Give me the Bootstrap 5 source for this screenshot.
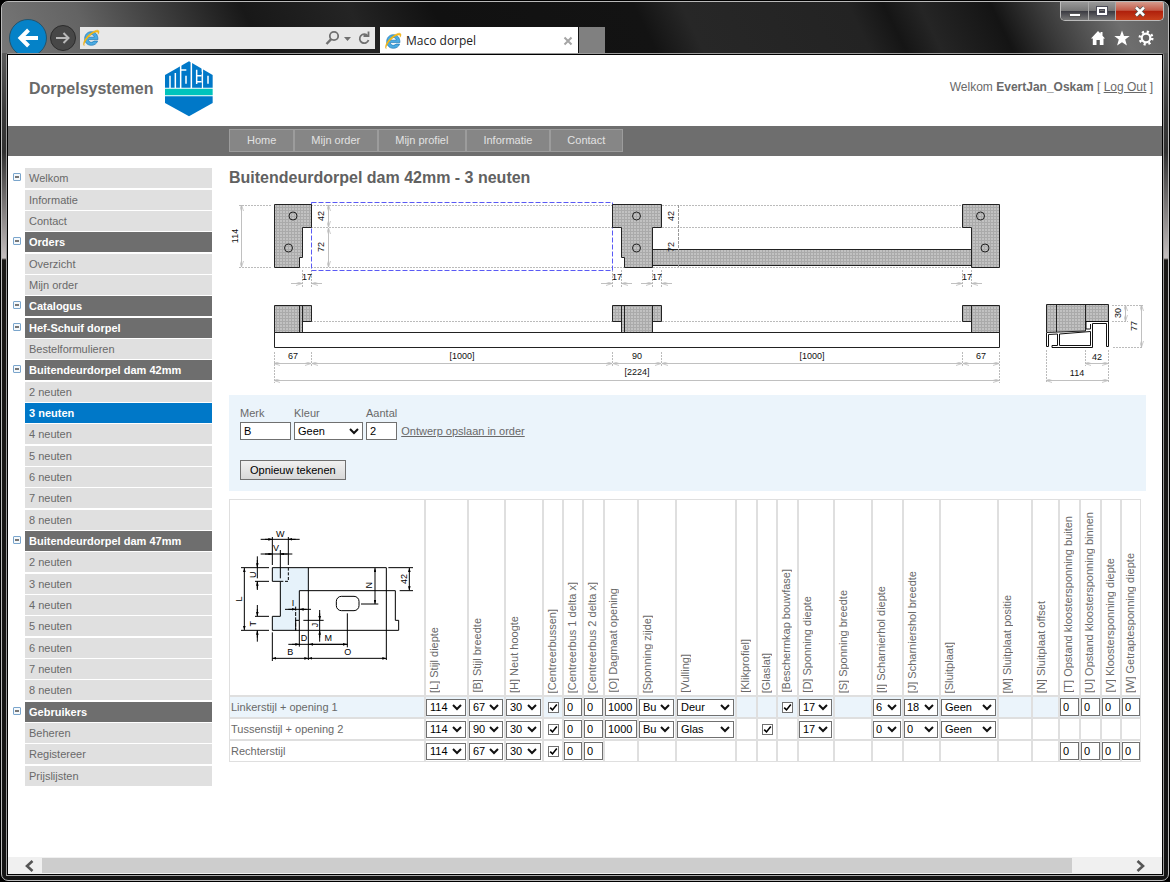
<!DOCTYPE html>
<html lang="nl">
<head>
<meta charset="utf-8">
<meta name="viewport" content="width=device-width, initial-scale=1">
<title>Maco dorpel</title>
<link rel="stylesheet" href="https://cdn.jsdelivr.net/npm/bootstrap@5.3.0/dist/css/bootstrap.min.css">
<style>
body{background:#000;padding:1px;font:11px/14px "Liberation Sans",Arial,sans-serif;color:#696969}
a{color:inherit}
button{font:inherit}
.frame{border:1px solid #b9b9b9;border-radius:7px;padding:0 4px 4px;
  background:linear-gradient(#777 0,#3a3a3a 110px,#303030 150px,#c5bfbf 256px,#1a1816 258px,#141414 100%)}
.chrome{height:51px;margin:0 -4px;overflow:hidden;border-radius:6px 6px 0 0;
  background:linear-gradient(64deg,#777 0,#636363 8%,#3d3d3d 15%,#181818 22%,#242424 31%,#111 38%,#131313 55%,#272727 59%,#232323 73%,#151515 76%,#252525 79%,#141414 85%,#3a3a3a 89%,#6e6e6e 95%,#5d5d5d 100%)}
.navround{border-radius:50%;flex:none;border:1px solid #333}
.nav-back{width:38px;height:38px;margin:17px 3px 0 7px;background:#0582c8;border-color:#26536b}
.nav-fwd{width:26px;height:26px;margin:23px 4px 0 0;background:#474747;border:1px solid #2b2b2b}
.addr{width:295px;height:22px;margin:25px 5px 0 0;background:#e8e8e8;padding:0 4px 0 2px}
.addr input{border:0;background:none;min-width:0;outline:0}
.tab-on{width:198px;height:27px;margin-top:25px;background:#fff;color:#222;padding:0 5px 0 4px;font:12px/26px "Open Sans","Noto Sans",sans-serif}
.tab-new{width:26px;height:27px;margin:25px 0 0 1px;background:#808080}
.tools{margin:8px 14px 0 0}
.caption{border:1px solid #bbb;border-top:0;border-radius:0 0 5px 5px;overflow:hidden;margin-right:4px}
.caption button{height:18px;background:linear-gradient(#999 0,#777 48%,#3b3b42 52%,#777 100%);border-right:1px solid #aaa}
.caption .c-min{width:28px}.caption .c-max{width:27px}
.caption .c-close{width:47px;border:0;background:linear-gradient(#d59a8c 0,#c45a48 46%,#b0200c 52%,#c8401c 100%)}
.pane{border:1px solid #9a9a9a;border-bottom-color:#aaa;border-radius:3px 3px 0 0}
.page{border:1px solid #000;background:#fff}
.top{height:71px;padding:0 9px 4px 21px}
.brand{font-size:16px;line-height:20px;font-weight:bold;color:#696969;gap:11px}
.who{font-size:12px;line-height:16px;padding-bottom:4px}
.bar{background:#6e6e6e;height:30px;padding:3px 0 4px 221px}
.menu{border:1px solid #9c9c9c;background:#868686}
.menu a{padding:0 17px;line-height:21px;color:#e2e2e2;text-decoration:none}
.menu li+li a{border-left:2px solid #9c9c9c;padding-left:16px}
.side{width:204px;padding:12px 0 0 5px;flex:none}
.side li{height:20px;margin-bottom:1px}
.side li:nth-child(3n+1){margin-bottom:2px}
.side a{background:#e0e0e0;line-height:20px;padding-left:4px;text-decoration:none;margin-left:12px}
.side button+a{margin-left:4px}
.side .grp a{background:#6e6e6e;color:#fff;font-weight:bold}
.side .cur a{background:#0078c8;color:#fff;font-weight:bold}
.fold{width:8px;height:8px;margin-top:5px;border:1px solid #7aa5cc;border-radius:1px;background:#f4f8fb}
.fold::before{content:"";display:block;width:4px;height:2px;margin:auto;background:#777}
.work{padding:12px 16px 20px 17px}
h1{font-size:16px;line-height:20px;font-weight:bold;margin:0;color:#616161}
.draw{display:block;width:100%;margin:0 0 8px}
.calc{background:#ebf4fb;padding:9px 11px 11px}
.calc .fields{gap:3px}
.calc label{line-height:18px;display:block}
.calc a{line-height:18px;margin-left:1px}
.fld{border:1px solid #707070;background-color:#fff;color:#000;border-radius:0;padding:0 3px;height:18px;font:11px/14px "Liberation Sans",Arial,sans-serif;display:block}
select.fld{appearance:none;padding:0 0 0 3px;background-image:url("data:image/svg+xml,%3Csvg xmlns='http://www.w3.org/2000/svg' width='10' height='7'%3E%3Cpath d='M1 1l4 4 4-4' fill='none' stroke='%23111' stroke-width='2'/%3E%3C/svg%3E");background-repeat:no-repeat;background-position:right 3px center}
.w-merk{width:51px}.w-kleur{width:69px}.w-aantal{width:31px}
.redraw{border:1px solid #707070;background:linear-gradient(#f0f0f0,#d8d8d8);color:#000;height:20px;padding:0 9px;line-height:17px;margin-top:20px}
.spec{table-layout:fixed;width:912px;margin-top:8px;border-collapse:separate;border-spacing:0;border:0}
.spec td,.spec th{border:1px solid #dfdfdf;padding:0;height:22px;font-weight:normal;white-space:nowrap;vertical-align:middle}
.spec tbody th{padding-left:1px}
.spec thead th{height:197px;vertical-align:bottom;padding:0 0 2px 1px}
.spec thead th:first-child{padding:0}
.spec thead span{writing-mode:vertical-rl;transform:rotate(180deg);line-height:15px;display:block}
.spec .sel{background:#ebf4fb}
.spec select.fld{width:calc(100% - 1px);height:17px}
.spec input.fld{width:100%;padding:0 2px}
.spec select.wd{padding-left:2px}
.chk{appearance:none;display:block;width:11px;height:11px;margin:0 auto;border:1px solid #707070;background:#fff}
.chk:checked{background:#fff url("data:image/svg+xml,%3Csvg xmlns='http://www.w3.org/2000/svg' width='9' height='9'%3E%3Cpath d='M1.2 4.6l2.3 2.3 4.3-5.4' fill='none' stroke='%23000' stroke-width='1.6'/%3E%3C/svg%3E") center no-repeat}
.hscroll{height:17px;background:#f0f0f0;padding:1px 0}
.hscroll button{width:34px;background:none}
.hscroll .r-end{width:90px}
.thumb{background:#cdcdcd}
svg text{font-family:"Liberation Sans",Arial,sans-serif;text-anchor:middle}
.dims text{font-size:9px;fill:#111}
</style>
</head>
<body class="min-vh-100 d-flex flex-column">
<svg width="0" height="0" class="position-absolute" aria-hidden="true">
  <defs>
    <symbol id="ie" viewBox="0 0 18 18">
      <path d="M15.9 10.6H6.3c.2 1.7 1.4 2.7 3.1 2.7 1.200 0 2-.4 2.600-1.200h3.600c-.9 2.600-3.200 4.200-6.200 4.200-3.900 0-6.700-2.700-6.700-6.700s2.800-6.900 6.700-6.900c4 0 6.600 2.900 6.500 7.900zM6.400 8.200h5.900C12.100 6.600 11 5.600 9.400 5.600S6.700 6.600 6.400 8.200z" fill="#4aabe2" stroke="#1d77b5" stroke-width=".7"/>
      <path d="M2.200 16.700C.2 15 2.600 9.600 7 5.600 11.300 1.600 16 .2 16.800 1.900c.4 1-.1 2.300-.7 3.300.2-1.400-.1-2.100-1.100-2.200-1.900-.1-5 1.600-8 4.700-3.300 3.400-5.300 7.300-4.900 9z" fill="#fcbf12" stroke="#e0a010" stroke-width=".4"/>
    </symbol>
    <pattern id="hatch" width="3" height="3" patternUnits="userSpaceOnUse">
      <rect width="3" height="3" fill="#c2c2c2"/><path d="M0 .5H3M.5 0V3" stroke="#aaa"/>
    </pattern>
    <marker id="ar" viewBox="0 0 6 4" refX="6" refY="2" markerWidth="6" markerHeight="4" markerUnits="userSpaceOnUse" orient="auto-start-reverse"><path d="M0 0L6 2 0 4" fill="none" stroke="#bbb" stroke-width=".8"/></marker>
    <marker id="tri" viewBox="0 0 12 8" refX="12" refY="4" markerWidth="12" markerHeight="8" markerUnits="userSpaceOnUse" orient="auto-start-reverse"><path d="M0 0L12 4 0 8z" fill="#000"/></marker>
  </defs>
</svg>
<div class="frame flex-grow-1 d-flex flex-column">
  <header class="chrome d-flex align-items-start flex-none">
    <button class="navround nav-back p-0 d-flex align-items-center justify-content-center" aria-label="Vorige"><svg width="22" height="20" viewBox="0 0 22 20"><path d="M21 10H4M11.500 2L3.500 10l8 8" fill="none" stroke="#fff" stroke-width="4"/></svg></button>
    <button class="navround nav-fwd p-0 d-flex align-items-center justify-content-center" aria-label="Volgende"><svg width="14" height="14" viewBox="0 0 14 14"><path d="M0 7h12M7.500 2l5 5-5 5" fill="none" stroke="#b8b8b8" stroke-width="2"/></svg></button>
    <div class="addr d-flex align-items-center">
      <svg width="18" height="18"><use href="#ie"/></svg>
      <input class="flex-grow-1" type="text" aria-label="Adres">
      <svg width="46" height="16" viewBox="0 0 46 16" fill="none" stroke="#707070"><circle cx="9" cy="6" r="4.200" stroke-width="1.800"/><path d="M6.200 9.200L1.500 14" stroke-width="2.400"/><path d="M19 7h7l-3.500 4z" fill="#707070" stroke="none"/><path d="M42.800 6A4.500 4.500 0 1 0 43.500 10" stroke-width="1.800"/><path d="M38.500 6h5V1.500" stroke-width="1.800"/></svg>
    </div>
    <div class="tab-on d-flex align-items-center">
      <svg width="18" height="18"><use href="#ie"/></svg>
      <span class="flex-grow-1 ps-1">Maco dorpel</span>
      <button class="border-0 bg-transparent p-0 d-flex" aria-label="Tabblad sluiten"><svg width="10" height="10" viewBox="0 0 10 10"><path d="M1.500 1.500l7 7M8.500 1.500l-7 7" stroke="#a5a5a5" stroke-width="2"/></svg></button>
    </div>
    <button class="tab-new border-0 p-0" aria-label="Nieuw tabblad"></button>
    <div class="ms-auto d-flex flex-column align-items-end">
      <div class="caption d-flex">
        <button class="c-min border-top-0 border-start-0 border-bottom-0 p-0" aria-label="Minimaliseren"><svg width="12" height="5" class="d-block mx-auto mt-2"><rect x=".5" y=".5" width="11" height="3" fill="#fff" stroke="#555"/></svg></button>
        <button class="c-max border-top-0 border-start-0 border-bottom-0 p-0" aria-label="Maximaliseren"><svg width="12" height="10" class="d-block mx-auto"><rect x="2" y="2" width="8" height="6" fill="none" stroke="#4c4c58" stroke-width="4"/><rect x="2" y="2" width="8" height="6" fill="none" stroke="#fff" stroke-width="2"/></svg></button>
        <button class="c-close p-0" aria-label="Sluiten"><svg width="12" height="11" class="d-block mx-auto" fill="none"><path d="M2 1.500l8 8M10 1.500l-8 8" stroke="#555" stroke-width="4"/><path d="M2 1.500l8 8M10 1.500l-8 8" stroke="#fff" stroke-width="2.500"/></svg></button>
      </div>
      <div class="tools d-flex gap-2">
        <svg width="16" height="18" viewBox="0 0 16 18"><path d="M1 9.500L8 2l2.500 2.600V3h2v3.800L15 9.500h-1.500V16H9.800v-5H6.500v5H2.800V9.500z" fill="#fff"/></svg>
        <svg width="16" height="18" viewBox="0 0 16 18"><path d="M8 1.500l2 5.500h5.700l-4.500 3.600 1.700 5.900L8 13.200l-4.900 3.300 1.700-5.900L.3 7H6z" fill="#fff"/></svg>
        <svg width="16" height="18" viewBox="0 0 16 18"><circle cx="8" cy="9" r="4.300" fill="none" stroke="#fff" stroke-width="2.200"/><circle cx="8" cy="9" r="6.300" fill="none" stroke="#fff" stroke-width="2.400" stroke-dasharray="2.200 2.750"/></svg>
      </div>
    </div>
  </header>
  <div class="pane flex-grow-1 d-flex">
  <div class="page flex-grow-1 d-flex flex-column">
    <div class="top d-flex align-items-center justify-content-between">
      <div class="brand d-flex align-items-center">
        <span>Dorpelsystemen</span>
        <svg width="48" height="56" viewBox="492 182 144 168" role="img" aria-label="Maco">
          <path d="M492 262V224L564 183 635 224V262z" fill="#0078c8"/>
          <path d="M492 265H635V285H492z" fill="#00c3bc"/>
          <path d="M492 288H635V308L564 348 492 308z" fill="#0078c8"/>
          <path d="M507 263V226M523 263V218M539 190V264M556 209H540M555 226V250M571 182V264M587 208V251M601 226H588M601 244H588M604 198V264M621 226V250" stroke="#fff" stroke-width="4.500" fill="none"/>
          <path d="M600 214V221M600 247V262" stroke="#0078c8" stroke-width="4"/>
        </svg>
      </div>
      <div class="who">Welkom <b>EvertJan_Oskam</b> [ <a href="#">Log Out</a> ]</div>
    </div>
    <nav class="bar d-flex" aria-label="Hoofdmenu">
      <ul class="menu list-unstyled d-flex m-0">
        <li><a class="d-block" href="#">Home</a></li><li><a class="d-block" href="#">Mijn order</a></li><li><a class="d-block" href="#">Mijn profiel</a></li><li><a class="d-block" href="#">Informatie</a></li><li><a class="d-block" href="#">Contact</a></li>
      </ul>
    </nav>
    <div class="d-flex flex-grow-1">
      <nav class="side" aria-label="Navigatie">
        <ul class="list-unstyled m-0">
          <li class="d-flex align-items-start"><button class="fold p-0" aria-label="Inklappen"></button><a class="flex-grow-1" href="#">Welkom</a></li>
          <li class="d-flex"><a class="flex-grow-1" href="#">Informatie</a></li>
          <li class="d-flex"><a class="flex-grow-1" href="#">Contact</a></li>
          <li class="grp d-flex align-items-start"><button class="fold p-0" aria-label="Inklappen"></button><a class="flex-grow-1" href="#">Orders</a></li>
          <li class="d-flex"><a class="flex-grow-1" href="#">Overzicht</a></li>
          <li class="d-flex"><a class="flex-grow-1" href="#">Mijn order</a></li>
          <li class="grp d-flex align-items-start"><button class="fold p-0" aria-label="Inklappen"></button><a class="flex-grow-1" href="#">Catalogus</a></li>
          <li class="grp d-flex align-items-start"><button class="fold p-0" aria-label="Inklappen"></button><a class="flex-grow-1" href="#">Hef-Schuif dorpel</a></li>
          <li class="d-flex"><a class="flex-grow-1" href="#">Bestelformulieren</a></li>
          <li class="grp d-flex align-items-start"><button class="fold p-0" aria-label="Inklappen"></button><a class="flex-grow-1" href="#">Buitendeurdorpel dam 42mm</a></li>
          <li class="d-flex"><a class="flex-grow-1" href="#">2 neuten</a></li>
          <li class="cur d-flex"><a class="flex-grow-1" href="#" aria-current="page">3 neuten</a></li>
          <li class="d-flex"><a class="flex-grow-1" href="#">4 neuten</a></li>
          <li class="d-flex"><a class="flex-grow-1" href="#">5 neuten</a></li>
          <li class="d-flex"><a class="flex-grow-1" href="#">6 neuten</a></li>
          <li class="d-flex"><a class="flex-grow-1" href="#">7 neuten</a></li>
          <li class="d-flex"><a class="flex-grow-1" href="#">8 neuten</a></li>
          <li class="grp d-flex align-items-start"><button class="fold p-0" aria-label="Inklappen"></button><a class="flex-grow-1" href="#">Buitendeurdorpel dam 47mm</a></li>
          <li class="d-flex"><a class="flex-grow-1" href="#">2 neuten</a></li>
          <li class="d-flex"><a class="flex-grow-1" href="#">3 neuten</a></li>
          <li class="d-flex"><a class="flex-grow-1" href="#">4 neuten</a></li>
          <li class="d-flex"><a class="flex-grow-1" href="#">5 neuten</a></li>
          <li class="d-flex"><a class="flex-grow-1" href="#">6 neuten</a></li>
          <li class="d-flex"><a class="flex-grow-1" href="#">7 neuten</a></li>
          <li class="d-flex"><a class="flex-grow-1" href="#">8 neuten</a></li>
          <li class="grp d-flex align-items-start"><button class="fold p-0" aria-label="Inklappen"></button><a class="flex-grow-1" href="#">Gebruikers</a></li>
          <li class="d-flex"><a class="flex-grow-1" href="#">Beheren</a></li>
          <li class="d-flex"><a class="flex-grow-1" href="#">Registereer</a></li>
          <li class="d-flex"><a class="flex-grow-1" href="#">Prijslijsten</a></li>
        </ul>
      </nav>
      <main class="work flex-grow-1">
        <h1>Buitendeurdorpel dam 42mm - 3 neuten</h1>
        <svg class="draw dims" viewBox="229 188 917 199" role="img" aria-label="Technische tekening">
          <g stroke="#bbb" stroke-dasharray="2 1" fill="none">
            <path d="M239 205.500H272M239 267.500H272M311 205.500H962M302 227.500H971M299 267.500H971M311 321.500H962"/>
            <path d="M302.500 270V287M311.500 270V287M612.500 270V287M621.500 270V287M652.500 270V287M661.500 270V287M962.500 270V287M971.500 270V287"/>
            <path d="M1112 305.500H1143M1112 321.500H1128M1113 347.500H1143M1046.500 350V383M1108.500 350V383M1085.500 350V366M999.500 352V383M274.500 352V383M311.500 352V366M612.500 352V366M661.500 352V366M962.500 352V366"/>
          </g>
          <g stroke="#c0c0c0" fill="none" marker-start="url(#ar)" marker-end="url(#ar)">
            <path d="M241.500 205V267"/><path d="M328.500 205V227"/><path d="M328.500 228V267"/>
            <path d="M274 363.500H311"/><path d="M312 363.500H612"/><path d="M613 363.500H661"/><path d="M662 363.500H962"/><path d="M963 363.500H999"/>
            <path d="M274 380.500H999"/><path d="M1125.500 305V321"/><path d="M1141.500 305V347"/><path d="M1085 363.500H1108"/><path d="M1046 380.500H1108"/>
          </g>
          <g stroke="#c0c0c0" fill="none" marker-end="url(#ar)">
            <path d="M291 283.500H302"/><path d="M322 283.500H312"/><path d="M601 283.500H612"/><path d="M632 283.500H622"/><path d="M641 283.500H652"/><path d="M672 283.500H662"/><path d="M951 283.500H962"/><path d="M982 283.500H972"/>
          </g>
          <rect x="311.500" y="202.500" width="301" height="68" fill="none" stroke="#5a5af5" stroke-dasharray="5 2"/>
          <g fill="url(#hatch)" stroke="#222">
            <path d="M652.500 249.500H971.500V265.500H652.500z"/>
            <path d="M274.500 204.500H311.500V227.500H302.500V257.500H299.500V267.500H274.500z"/>
            <path d="M612.500 204.500H661.500V227.500H652.500V267.500H624.500V257.500H621.500V227.500H612.500z"/>
            <path d="M962.500 204.500H999.500V267.500H971.500V227.500H962.500z"/>
            <circle cx="293" cy="216" r="4"/><circle cx="288.500" cy="248" r="4"/><circle cx="636.500" cy="216" r="4"/><circle cx="636.500" cy="248" r="4"/><circle cx="980.500" cy="216" r="4"/><circle cx="985" cy="248" r="4"/>
            <path d="M274.500 305.500H311.500V321.500H302.500V332.500H274.500zM299.500 305V332M302.500 305V332"/>
            <path d="M612.500 305.500H661.500V321.500H652.500V332.500H621.500V321.500H612.500zM621.500 305V332M624.500 305V332M652.500 305V332"/>
            <path d="M962.500 305.500H999.500V332.500H971.500V321.500H962.500zM971.500 305V332"/>
            <path d="M1046.500 304.500H1108.500V321.500H1085.500V331L1046.500 332.500zM1056.500 304V332M1085.500 304V322"/>
          </g>
          <path d="M678.500 205V267" stroke="#999" stroke-dasharray="3 1"/>
          <path d="M274.500 332.500H999.500V347.500H274.500z" fill="none" stroke="#222"/>
          <g fill="none" stroke="#111">
            <path d="M1046.500 333V346.500H1048.500V334.500L1057.500 334V345.500H1052V347.500H1092.500V323.500H1106.500V346.500H1108.500V321.500H1086V329H1090.500V324M1059.500 334L1090.500 331.500V345.500H1059.500z"/>
          </g>
          <g>
            <text transform="translate(237.500 236) rotate(-90)">114</text><text transform="translate(323.500 216) rotate(-90)">42</text><text transform="translate(323.500 247) rotate(-90)">72</text>
            <text transform="translate(673.500 216) rotate(-90)">42</text><text transform="translate(673.500 247) rotate(-90)">72</text>
            <text x="307" y="280">17</text><text x="617" y="280">17</text><text x="657" y="280">17</text><text x="967" y="280">17</text>
            <text x="293" y="359">67</text><text x="462" y="359">[1000]</text><text x="637" y="359">90</text><text x="812" y="359">[1000]</text><text x="981" y="359">67</text><text x="637" y="375">[2224]</text>
            <text x="1097" y="360">42</text><text x="1077" y="376">114</text>
            <text transform="translate(1121 313) rotate(-90)">30</text><text transform="translate(1137 326) rotate(-90)">77</text>
          </g>
        </svg>
        <form class="calc" onsubmit="return false">
          <div class="fields d-flex align-items-end">
            <div><label for="merk">Merk</label><input id="merk" class="fld w-merk" type="text" value="B"></div>
            <div><label for="kleur">Kleur</label><select id="kleur" class="fld w-kleur"><option>Geen</option></select></div>
            <div><label for="aantal">Aantal</label><input id="aantal" class="fld w-aantal" type="text" value="2"></div>
            <a href="#">Ontwerp opslaan in order</a>
          </div>
          <button class="redraw">Opnieuw tekenen</button>
        </form>
        <table class="spec">
          <colgroup>
            <col style="width:196px"><col style="width:43px"><col style="width:37px"><col style="width:38px"><col style="width:20px"><col style="width:20px"><col style="width:21px"><col style="width:34px"><col style="width:38px"><col style="width:60px"><col style="width:21px"><col style="width:20px"><col style="width:21px"><col style="width:36px"><col style="width:38px"><col style="width:31px"><col style="width:37px"><col style="width:58px"><col style="width:34px"><col style="width:27px"><col style="width:21px"><col style="width:21px"><col style="width:20px"><col style="width:20px">
          </colgroup>
          <thead><tr>
            <th scope="col"><svg class="d-block" width="194" height="195" viewBox="15 15 582 585" role="img" aria-label="Maatvoering neut">
              <path d="M142 218H250V287H223V376H212V406H142V364H166V259H142z" fill="#e6f2fa"/>
              <g fill="none" stroke="#000" stroke-width="3">
                <path d="M142 218V259H166V364H142V406H521V376H511V287H223V376H212V406M142 218H484V495M250 218V495M223 376V455"/>
                <path d="M212 335V406" stroke-dasharray="12 4"/>
                <path d="M190 218V259H166" stroke-dasharray="9 5"/>
                <rect x="334" y="304" width="68" height="43" rx="15"/>
                <path d="M142 126V210M190 126V210M166 165V250M142 412V498M367 355V457M408 327H460M490 218H564M524 287H564M48 218H132M48 406H132M90 259H132M90 364H132M235 376H296"/>
                <path d="M107 133H224M107 177H202M97 184V250M97 259V285M97 330V362M97 406V440M180 343H258M284 345V440M190 448H368"/>
              </g>
              <g fill="none" stroke="#000" stroke-width="3" marker-start="url(#tri)" marker-end="url(#tri)">
                <path d="M58 219V405"/><path d="M142 490H250"/><path d="M250 490H484"/><path d="M450 219V327"/><path d="M553 219V286"/><path d="M252 448H366"/>
              </g>
              <g stroke="#000" stroke-width="3" marker-end="url(#tri)">
                <path d="M120 133H142"/><path d="M212 133H190"/><path d="M120 177H142"/><path d="M188 177H166"/><path d="M97 195V217"/><path d="M97 281V260"/><path d="M97 342V363"/><path d="M97 428V407"/><path d="M190 343H212"/><path d="M245 343H224"/><path d="M284 355V375"/><path d="M284 428V407"/><path d="M201 448H223"/>
              </g>
              <g font-size="27" fill="#000">
                <text x="166" y="126">W</text><text x="153" y="169">V</text><text x="204" y="333">I</text><text x="237" y="439">D</text><text x="310" y="439">M</text><text x="196" y="480">B</text><text x="368" y="480">O</text>
                <text transform="translate(93 239) rotate(-90)">U</text><text transform="translate(51 312) rotate(-90)">L</text><text transform="translate(93 386) rotate(-90)">T</text><text transform="translate(279 390) rotate(-90)">J</text><text transform="translate(442 271) rotate(-90)">N</text><text transform="translate(547 252) rotate(-90)">42</text>
              </g>
            </svg></th>
            <th scope="col"><span>[L] Stijl diepte</span></th><th scope="col"><span>[B] Stijl breedte</span></th><th scope="col"><span>[H] Neut hoogte</span></th><th scope="col"><span>[Centreerbussen]</span></th><th scope="col"><span>[Centreerbus 1 delta x]</span></th><th scope="col"><span>[Centreerbus 2 delta x]</span></th><th scope="col"><span>[O] Dagmaat opening</span></th><th scope="col"><span>[Sponning zijde]</span></th><th scope="col"><span>[Vulling]</span></th><th scope="col"><span>[Klikprofiel]</span></th><th scope="col"><span>[Glaslat]</span></th><th scope="col"><span>[Beschermkap bouwfase]</span></th><th scope="col"><span>[D] Sponning diepte</span></th><th scope="col"><span>[S] Sponning breedte</span></th><th scope="col"><span>[I] Scharnierhol diepte</span></th><th scope="col"><span>[J] Scharniershol breedte</span></th><th scope="col"><span>[Sluitplaat]</span></th><th scope="col"><span>[M] Sluitplaat positie</span></th><th scope="col"><span>[N] Sluitplaat offset</span></th><th scope="col"><span>[T] Opstand kloostersponning buiten</span></th><th scope="col"><span>[U] Opstand kloostersponning binnen</span></th><th scope="col"><span>[V] Kloostersponning diepte</span></th><th scope="col"><span>[W] Getraptesponning diepte</span></th>
          </tr></thead>
          <tbody>
            <tr class="sel">
              <th scope="row">Linkerstijl + opening 1</th>
              <td><select class="fld" aria-label="Stijl diepte 1"><option>114</option></select></td>
              <td><select class="fld" aria-label="Stijl breedte 1"><option>67</option></select></td>
              <td><select class="fld" aria-label="Neut hoogte 1"><option>30</option></select></td>
              <td><input class="chk" type="checkbox" aria-label="Centreerbussen 1" checked></td>
              <td><input class="fld" type="text" aria-label="Centreerbus 1 delta x 1" value="0"></td>
              <td><input class="fld" type="text" aria-label="Centreerbus 2 delta x 1" value="0"></td>
              <td><input class="fld" type="text" aria-label="Dagmaat opening 1" value="1000"></td>
              <td><select class="fld" aria-label="Sponning zijde 1"><option>Bu</option></select></td>
              <td><select class="fld" aria-label="Vulling 1"><option>Deur</option></select></td>
              <td></td><td></td>
              <td><input class="chk" type="checkbox" aria-label="Beschermkap bouwfase 1" checked></td>
              <td><select class="fld" aria-label="Sponning diepte 1"><option>17</option></select></td>
              <td></td>
              <td><select class="fld wd" aria-label="Scharnierhol diepte 1"><option>6</option></select></td>
              <td><select class="fld wd" aria-label="Scharniershol breedte 1"><option>18</option></select></td>
              <td><select class="fld" aria-label="Sluitplaat 1"><option>Geen</option></select></td>
              <td></td><td></td>
              <td><input class="fld" type="text" aria-label="Opstand buiten 1" value="0"></td>
              <td><input class="fld" type="text" aria-label="Opstand binnen 1" value="0"></td>
              <td><input class="fld" type="text" aria-label="Kloostersponning diepte 1" value="0"></td>
              <td><input class="fld" type="text" aria-label="Getraptesponning diepte 1" value="0"></td>
            </tr>
            <tr>
              <th scope="row">Tussenstijl + opening 2</th>
              <td><select class="fld" aria-label="Stijl diepte 2"><option>114</option></select></td>
              <td><select class="fld" aria-label="Stijl breedte 2"><option>90</option></select></td>
              <td><select class="fld" aria-label="Neut hoogte 2"><option>30</option></select></td>
              <td><input class="chk" type="checkbox" aria-label="Centreerbussen 2" checked></td>
              <td><input class="fld" type="text" aria-label="Centreerbus 1 delta x 2" value="0"></td>
              <td><input class="fld" type="text" aria-label="Centreerbus 2 delta x 2" value="0"></td>
              <td><input class="fld" type="text" aria-label="Dagmaat opening 2" value="1000"></td>
              <td><select class="fld" aria-label="Sponning zijde 2"><option>Bu</option></select></td>
              <td><select class="fld" aria-label="Vulling 2"><option>Glas</option></select></td>
              <td></td>
              <td><input class="chk" type="checkbox" aria-label="Glaslat 2" checked></td>
              <td></td>
              <td><select class="fld" aria-label="Sponning diepte 2"><option>17</option></select></td>
              <td></td>
              <td><select class="fld wd" aria-label="Scharnierhol diepte 2"><option>0</option></select></td>
              <td><select class="fld wd" aria-label="Scharniershol breedte 2"><option>0</option></select></td>
              <td><select class="fld" aria-label="Sluitplaat 2"><option>Geen</option></select></td>
              <td></td><td></td><td></td><td></td><td></td><td></td>
            </tr>
            <tr>
              <th scope="row">Rechterstijl</th>
              <td><select class="fld" aria-label="Stijl diepte 3"><option>114</option></select></td>
              <td><select class="fld" aria-label="Stijl breedte 3"><option>67</option></select></td>
              <td><select class="fld" aria-label="Neut hoogte 3"><option>30</option></select></td>
              <td><input class="chk" type="checkbox" aria-label="Centreerbussen 3" checked></td>
              <td><input class="fld" type="text" aria-label="Centreerbus 1 delta x 3" value="0"></td>
              <td><input class="fld" type="text" aria-label="Centreerbus 2 delta x 3" value="0"></td>
              <td></td><td></td><td></td><td></td><td></td><td></td><td></td><td></td><td></td><td></td><td></td><td></td><td></td>
              <td><input class="fld" type="text" aria-label="Opstand buiten 3" value="0"></td>
              <td><input class="fld" type="text" aria-label="Opstand binnen 3" value="0"></td>
              <td><input class="fld" type="text" aria-label="Kloostersponning diepte 3" value="0"></td>
              <td><input class="fld" type="text" aria-label="Getraptesponning diepte 3" value="0"></td>
            </tr>
          </tbody>
        </table>
      </main>
    </div>
    <div class="hscroll d-flex">
      <button class="border-0 p-0 ps-2" aria-label="Naar links"><svg class="d-block mx-auto" width="10" height="12" viewBox="0 0 10 12"><path d="M8.500 1L3 6l5.500 5" fill="none" stroke="#555" stroke-width="2.600"/></svg></button>
      <div class="thumb flex-grow-1"></div>
      <button class="r-end border-0 p-0 d-flex align-items-center justify-content-end pe-3" aria-label="Naar rechts"><svg width="10" height="12" viewBox="0 0 10 12"><path d="M1.500 1L7 6l-5.500 5" fill="none" stroke="#555" stroke-width="2.600"/></svg></button>
    </div>
  </div>
  </div>
</div>
<script src="https://cdn.jsdelivr.net/npm/bootstrap@5.3.0/dist/js/bootstrap.bundle.min.js"></script>
</body>
</html>
